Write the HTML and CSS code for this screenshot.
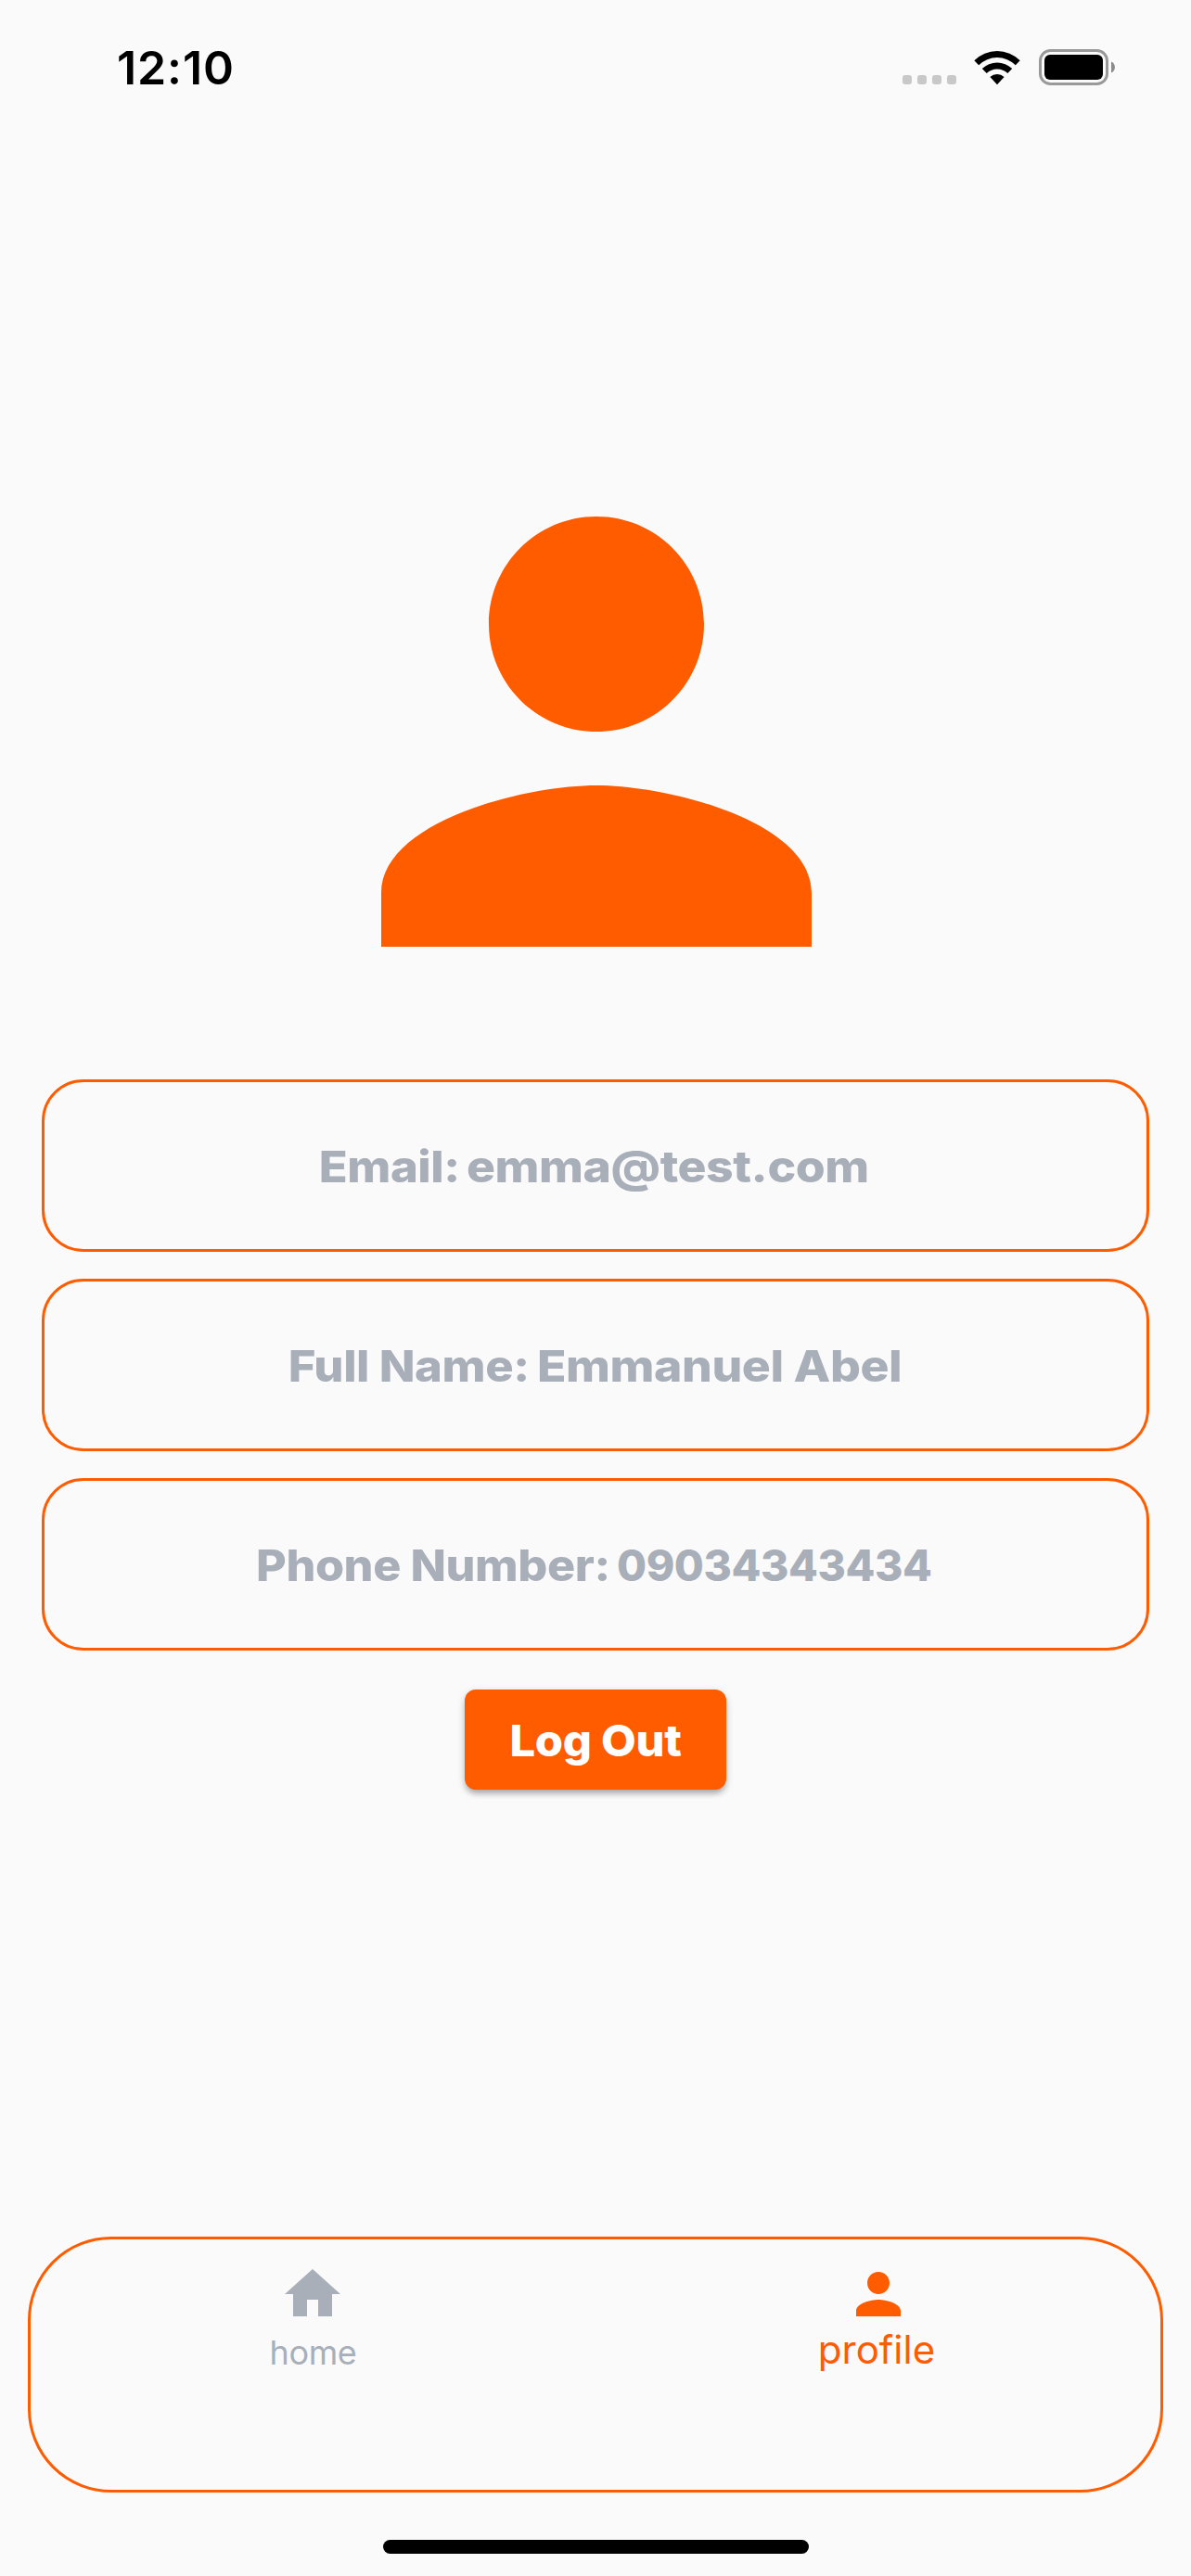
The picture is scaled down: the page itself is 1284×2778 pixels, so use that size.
FILE: index.html
```html
<!DOCTYPE html>
<html lang="en">
<head>
<meta charset="utf-8">
<title>Profile</title>
<link rel="stylesheet" href="styles.css">
</head>
<body>
<div class="screen">
  <header class="status">
    <span class="time">12:10</span>
    <div class="indicators">
      <div class="dots"><i></i><i></i><i></i><i></i></div>
      <svg class="wifi" viewBox="0 0 50 38">
        <path d="M0.3 11.3A35 35 0 0 1 49.7 11.3L44.8 16.3A28 28 0 0 0 5.2 16.3Z"/>
        <path d="M8.8 20.1A23.2 23.2 0 0 1 41.2 20.1L36.3 25A16.2 16.2 0 0 0 13.7 25Z"/>
        <path d="M17.4 29A11.3 11.3 0 0 1 32.6 29L25 37.2Z"/>
      </svg>
      <svg class="battery" viewBox="0 0 83 39">
        <rect x="1.5" y="1.5" width="72" height="36" rx="11" fill="none" stroke="#999" stroke-width="3"/>
        <rect x="6" y="6" width="63" height="27" rx="6"/>
        <path d="M78 13.5C83.3 15.5 83.3 23.5 78 25.5Z" fill="#8c8c8c"/>
      </svg>
    </div>
  </header>
  <main class="profile">
    <svg class="avatar" viewBox="0 0 24 24"><path d="M12 12c2.21 0 4-1.79 4-4s-1.79-4-4-4-4 1.79-4 4 1.79 4 4 4zm0 2c-2.67 0-8 1.34-8 4v2h16v-2c0-2.66-5.33-4-8-4z"/></svg>
    <div class="card email"><span class="text"><span class="label">Email:</span> <span class="value">emma@test.com</span></span></div>
    <div class="card name"><span class="text"><span class="label">Full Name:</span> <span class="value">Emmanuel Abel</span></span></div>
    <div class="card phone"><span class="text"><span class="label">Phone Number:</span> <span class="value">09034343434</span></span></div>
    <button class="logout"><span>Log Out</span></button>
  </main>
  <nav class="tabs">
    <a class="tab">
      <svg viewBox="0 0 24 24"><path d="M10 20v-6h4v6h5v-8h3L12 3 2 12h3v8z"/></svg>
      <span>home</span>
    </a>
    <a class="tab active">
      <svg viewBox="0 0 24 24"><path d="M12 12c2.21 0 4-1.79 4-4s-1.79-4-4-4-4 1.79-4 4 1.79 4 4 4zm0 2c-2.67 0-8 1.34-8 4v2h16v-2c0-2.66-5.33-4-8-4z"/></svg>
      <span>profile</span>
    </a>
  </nav>
  <div class="home-bar"></div>
</div>
</body>
</html>
```
FILE: styles.css
```css
* { box-sizing: border-box; }
body {
  margin: 0;
  background: #fafafa;
  font-family: Inter, "Liberation Sans", sans-serif;
}
svg { display: block; fill: currentColor; }
.screen {
  width: 1284px;
  height: 2778px;
  display: flex;
  flex-direction: column;
  align-items: center;
  overflow: hidden;
}
.status {
  width: 100%;
  height: 440px;
  flex: none;
  padding: 53px 81px 0 126px;
  display: flex;
  justify-content: space-between;
  align-items: flex-start;
  color: #000;
}
.time {
  font-size: 50px;
  line-height: 40px;
  font-weight: 600;
  letter-spacing: .9px;
}
.indicators { display: flex; align-items: flex-start; }
.dots { display: flex; gap: 6px; padding-top: 28px; margin-right: 19px; }
.dots i { width: 10px; height: 10px; border-radius: 3px; background: #c8c8c8; }
.wifi { width: 50px; height: 38px; margin-right: 20px; margin-top: 1px; }
.battery { width: 83px; height: 39px; }
.profile {
  width: 100%;
  padding: 0 45px;
  display: flex;
  flex-direction: column;
  align-items: center;
}
.avatar {
  width: 696px;
  height: 696px;
  margin: .5px 0 27.5px 1.4px;
  color: #ff5c00;
}
.card {
  width: 100%;
  height: 186px;
  padding-top: 1px;
  margin-bottom: 29px;
  border: 3px solid #ff5c00;
  border-radius: 45px;
  display: flex;
  justify-content: center;
  align-items: center;
  color: #a8afb9;
  font-size: 47px;
  line-height: 60px;
  font-weight: 800;
  letter-spacing: -.4px;
  white-space: nowrap;
}
.text { word-spacing: -2px; }
.label, .value { display: inline-block; word-spacing: 0; }
.label { transform: scaleX(1.08); transform-origin: right; }
.value { transform: scaleX(1.1); transform-origin: left; }
.email .text { padding-right: 32px; }
.name .text { padding-right: 17px; }
.phone .text { padding-left: 27px; }
.phone .label { transform: scaleX(1.07); }
.phone .value { transform: scaleX(.985); }
.logout {
  width: 282px;
  height: 108px;
  margin-top: 13px;
  padding: 1px 0 0;
  border: 0;
  border-radius: 12px;
  background: #ff5c00;
  box-shadow: 0 6px 6px -2px rgba(0,0,0,.2), 0 3px 8px rgba(0,0,0,.2);
  color: #fff;
  font: 800 47px/60px Inter, "Liberation Sans", sans-serif;
  letter-spacing: -.3px;
}
.logout span { display: inline-block; transform: scaleX(1.04); }
.tabs {
  width: 1224px;
  height: 276px;
  margin-top: auto;
  padding-top: 23px;
  flex: none;
  border: 3px solid #ff5c00;
  border-radius: 90px;
  display: flex;
}
.tab {
  flex: 1;
  display: flex;
  flex-direction: column;
  align-items: center;
  color: #a8afb9;
  font-size: 36px;
  line-height: 44px;
  letter-spacing: -.4px;
}
.tab svg { width: 72px; height: 72px; margin: 0 1px 5px 0; }
.tab.active { color: #ff5c00; font-size: 42px; letter-spacing: 0; }
.tab.active svg { margin: 0 0 2px; }
.tab.active span { padding-right: 3px; }
.home-bar {
  width: 459px;
  height: 15px;
  flex: none;
  margin: 51px 0 24px;
  border-radius: 8px;
  background: #000;
}
```
